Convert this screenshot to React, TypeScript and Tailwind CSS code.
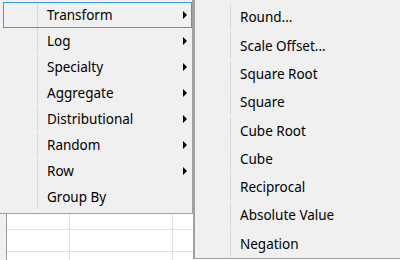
import React from 'react';

const mainItems = [
  { label: 'Transform', sub: true, active: true },
  { label: 'Log', sub: true },
  { label: 'Specialty', sub: true },
  { label: 'Aggregate', sub: true },
  { label: 'Distributional', sub: true },
  { label: 'Random', sub: true },
  { label: 'Row', sub: true },
  { label: 'Group By', sub: false },
];

const transformItems = [
  'Round...',
  'Scale Offset...',
  'Square Root',
  'Square',
  'Cube Root',
  'Cube',
  'Reciprocal',
  'Absolute Value',
  'Negation',
];

const Arrow = () => (
  <svg width="4" height="8" viewBox="0 0 4 8" className="ml-auto mr-[4px]">
    <path d="M0 0 L4 4 L0 8 Z" fill="#000" />
  </svg>
);

const Sheet = () => (
  <div className="flex flex-col pt-[10px]">
    {Array.from({ length: 12 }).map((_, i) => (
      <div key={i} className="flex h-[22px]">
        <div className="w-[7px] bg-[#f0f0f0] border-r border-[#9a9a9a]" />
        <div className="w-[63px] border-r border-b border-[#e0dfe8]" />
        <div className="w-[103px] border-r border-b border-[#e0dfe8]" />
        <div className="flex-1 border-b border-[#e0dfe8]" />
      </div>
    ))}
  </div>
);

export default function App() {
  return (
    <div
      className="relative w-[400px] h-[260px] overflow-hidden bg-white text-black text-[13.5px]"
      style={{ fontFamily: '"Segoe UI", "Noto Sans", sans-serif' }}
    >
      <Sheet />

      {/* main menu */}
      <div className="absolute left-0 top-0 w-[193px] h-[214px] bg-[#f0f0f0] border-r border-b border-[#a0a0a0] pt-[2px] pl-[3px]">
        {mainItems.map((item) => (
          <div
            key={item.label}
            className={
              'flex items-center h-[26px] border ' +
              (item.active ? 'border-[#3c9ee0]' : 'border-transparent')
            }
          >
            <div className="w-[34px] self-stretch border-r border-[#d7d7d7]" />
            <span className="ml-[9px] mt-[2px] leading-none">{item.label}</span>
            {item.sub && <Arrow />}
          </div>
        ))}
      </div>

      {/* transform submenu */}
      <div className="absolute left-[193px] top-0 w-[220px] h-[259px] bg-[#f0f0f0] border-l-2 border-b border-[#a0a0a0] pt-[3px] pl-[3px]">
        {transformItems.map((label) => (
          <div key={label} className="flex items-center h-[28.3px] border border-transparent">
            <div className="w-[32px] self-stretch border-r border-[#d7d7d7]" />
            <span className="ml-[9px] mt-[2px] leading-none">{label}</span>
          </div>
        ))}
      </div>
    </div>
  );
}
